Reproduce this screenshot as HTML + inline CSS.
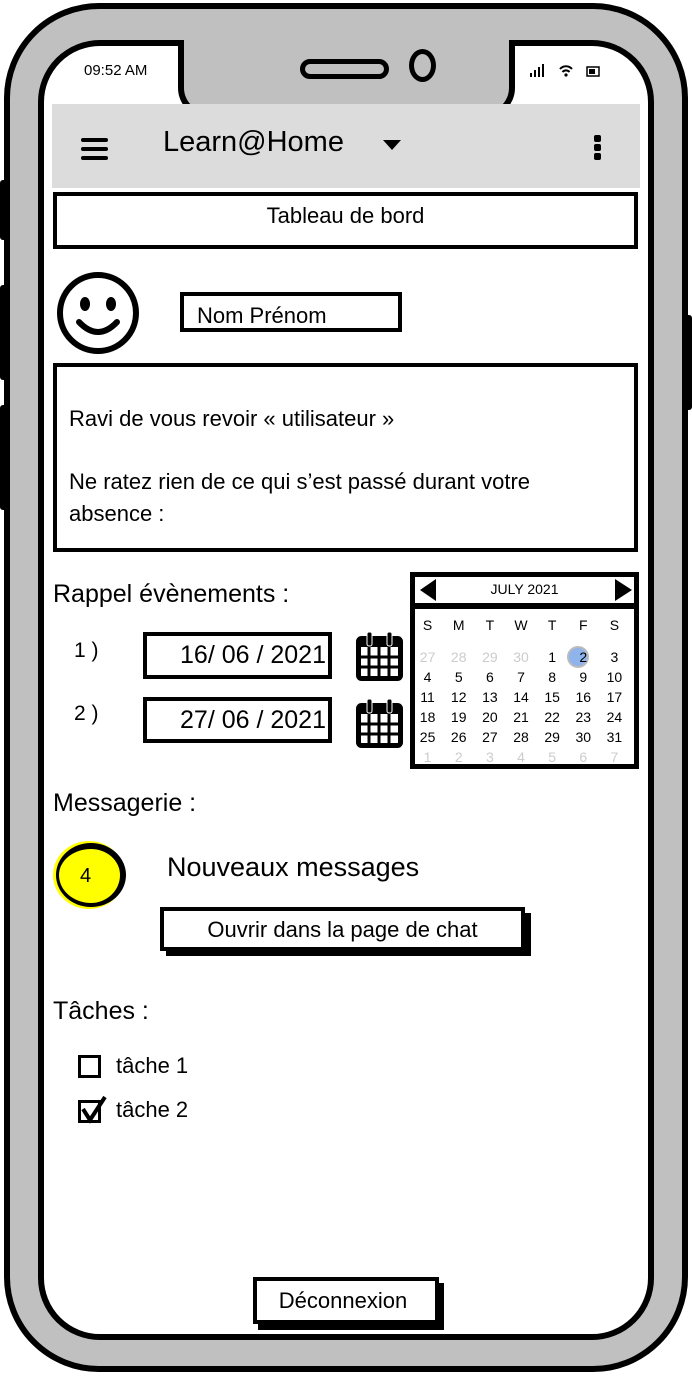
<!DOCTYPE html>
<html><head><meta charset="utf-8"><style>
body{margin:0;width:692px;height:1376px;position:relative;background:#fff;font-family:"Liberation Sans",sans-serif;overflow:hidden;color:#000}
.a{position:absolute}
.t{position:absolute;white-space:nowrap;line-height:1}
.box{position:absolute;border:4px solid #000;background:#fff;box-sizing:border-box}
.cal td{text-align:center;font-size:14px;height:20px;padding:0}
.g{color:#ccc}
</style></head><body>
<div class="a" style="left:0;top:180px;width:8px;height:60px;background:#000;border-radius:3px"></div>
<div class="a" style="left:0;top:285px;width:8px;height:95px;background:#000;border-radius:3px"></div>
<div class="a" style="left:0;top:405px;width:8px;height:105px;background:#000;border-radius:3px"></div>
<div class="a" style="left:684px;top:315px;width:8px;height:95px;background:#000;border-radius:3px"></div>
<div class="a" style="left:4px;top:3px;width:684px;height:1369px;box-sizing:border-box;border:6px solid #000;border-radius:95px;background:#c0c0c0"></div>
<div class="a" style="left:38px;top:40px;width:616px;height:1300px;box-sizing:border-box;border:6px solid #000;border-radius:62px;background:#fff"></div>
<div class="a" style="left:178px;top:40px;width:337px;height:78px;box-sizing:border-box;border:6px solid #000;border-top:none;border-radius:0 0 30px 30px;background:#c0c0c0"></div>
<div class="a" style="left:184px;top:40px;width:325px;height:8px;background:#c0c0c0"></div>
<div class="a" style="left:300px;top:59px;width:89px;height:20px;box-sizing:border-box;border:5px solid #000;border-radius:10px;background:#c0c0c0"></div>
<div class="a" style="left:409px;top:49px;width:27px;height:33px;box-sizing:border-box;border:5px solid #000;border-radius:50%;background:#c0c0c0"></div>
<div class="t" style="left:84px;top:63px;font-size:15px">09:52 AM</div>
<svg class="a" style="left:528px;top:62px" width="80" height="18"><rect x="2" y="11" width="2" height="4"/><rect x="6" y="8" width="2" height="7"/><rect x="10" y="5" width="2" height="10"/><rect x="14" y="2" width="2" height="13"/><path d="M32 7a8 8 0 0 1 12 0M34.5 10a4.5 4.5 0 0 1 7 0" stroke="#000" stroke-width="2" fill="none"/><circle cx="38" cy="13" r="1.6"/><rect x="59" y="5" width="12" height="9" fill="none" stroke="#000" stroke-width="1.5"/><rect x="61" y="7" width="6" height="5"/></svg>
<div class="a" style="left:52px;top:104px;width:588px;height:84px;background:#dcdcdc"></div>
<div class="a" style="left:81px;top:138px;width:27px;height:4px;background:#000;border-radius:2px"></div>
<div class="a" style="left:81px;top:147px;width:27px;height:4px;background:#000;border-radius:2px"></div>
<div class="a" style="left:81px;top:156px;width:27px;height:4px;background:#000;border-radius:2px"></div>
<div class="t" style="left:163px;top:128px;font-size:29px">Learn@Home</div>
<svg class="a" style="left:382px;top:139px" width="20" height="12"><path d="M1 1h18l-9 10z"/></svg>
<div class="a" style="left:594px;top:135px;width:7px;height:7px;background:#000;border-radius:2px"></div>
<div class="a" style="left:594px;top:144px;width:7px;height:7px;background:#000;border-radius:2px"></div>
<div class="a" style="left:594px;top:153px;width:7px;height:7px;background:#000;border-radius:2px"></div>
<div class="box" style="left:53px;top:192px;width:585px;height:57px"></div>
<div class="t" style="left:53px;top:205px;width:585px;text-align:center;font-size:22px">Tableau de bord</div>
<svg class="a" style="left:55px;top:270px" width="88" height="88"><circle cx="43" cy="43" r="38" fill="none" stroke="#000" stroke-width="6"/><ellipse cx="30" cy="34" rx="5" ry="7"/><ellipse cx="56" cy="34" rx="5" ry="7"/><path d="M24 52q19 20 38 0" fill="none" stroke="#000" stroke-width="6" stroke-linecap="round"/></svg>
<div class="box" style="left:180px;top:292px;width:222px;height:40px"></div>
<div class="t" style="left:197px;top:305px;font-size:22px">Nom Prénom</div>
<div class="box" style="left:53px;top:363px;width:585px;height:189px"></div>
<div class="t" style="left:69px;top:408px;font-size:22px">Ravi de vous revoir « utilisateur »</div>
<div class="t" style="left:69px;top:471px;font-size:22px">Ne ratez rien de ce qui s’est passé durant votre</div>
<div class="t" style="left:69px;top:503px;font-size:22px">absence :</div>
<div class="t" style="left:53px;top:582px;font-size:25px">Rappel évènements :</div>
<div class="t" style="left:74px;top:640px;font-size:21px">1 )</div>
<div class="t" style="left:74px;top:703px;font-size:21px">2 )</div>
<div class="box" style="left:143px;top:632px;width:189px;height:47px"></div>
<div class="t" style="left:143px;top:643px;width:183px;text-align:right;font-size:25px">16/ 06 / 2021</div>
<div class="box" style="left:143px;top:697px;width:189px;height:46px"></div>
<div class="t" style="left:143px;top:708px;width:183px;text-align:right;font-size:25px">27/ 06 / 2021</div>
<svg class="a" style="left:356px;top:630px" width="48" height="120"><g id="c"><rect x="2.5" y="8.5" width="42" height="40" rx="3" fill="none" stroke="#000" stroke-width="5"/><rect x="2" y="8" width="43" height="9"/><rect x="11" y="2" width="5" height="14" rx="2" stroke="#fff" stroke-width="1"/><rect x="31" y="2" width="5" height="14" rx="2" stroke="#fff" stroke-width="1"/><path d="M4 27h39M4 37h39M13 17v30M23 17v30M33 17v30" stroke="#000" stroke-width="3"/></g><use href="#c" y="67"/></svg>
<div class="a" style="left:410px;top:572px;width:229px;height:197px;box-sizing:border-box;border:5px solid #000;background:#fff"></div>
<div class="a" style="left:413px;top:603px;width:223px;height:6px;background:#000"></div>
<svg class="a" style="left:418px;top:578px" width="216" height="24"><path d="M2 12L18 1v22z"/><path d="M214 12L197 1v22z"/></svg>
<div class="t" style="left:410px;top:582px;width:229px;text-align:center;font-size:14px">JULY 2021</div>
<div class="a" style="left:567px;top:646px;width:22px;height:22px;border-radius:50%;background:#8fb4ec;border:2px solid #bbb;box-sizing:border-box"></div>
<table class="a cal" style="left:412px;top:615px;border-collapse:collapse;width:218px;table-layout:fixed">
<tr><td>S</td><td>M</td><td>T</td><td>W</td><td>T</td><td>F</td><td>S</td></tr>
<tr style="height:12px"><td colspan="7" style="height:12px"></td></tr>
<tr><td class="g">27</td><td class="g">28</td><td class="g">29</td><td class="g">30</td><td>1</td><td>2</td><td>3</td></tr>
<tr><td>4</td><td>5</td><td>6</td><td>7</td><td>8</td><td>9</td><td>10</td></tr>
<tr><td>11</td><td>12</td><td>13</td><td>14</td><td>15</td><td>16</td><td>17</td></tr>
<tr><td>18</td><td>19</td><td>20</td><td>21</td><td>22</td><td>23</td><td>24</td></tr>
<tr><td>25</td><td>26</td><td>27</td><td>28</td><td>29</td><td>30</td><td>31</td></tr>
<tr><td class="g">1</td><td class="g">2</td><td class="g">3</td><td class="g">4</td><td class="g">5</td><td class="g">6</td><td class="g">7</td></tr>
</table>
<div class="t" style="left:53px;top:791px;font-size:25px">Messagerie :</div>
<div class="a" style="left:53px;top:841px;width:72px;height:68px;border-radius:50%;background:#ffff00"></div>
<div class="a" style="left:56px;top:843px;width:70px;height:64px;box-sizing:border-box;border:6px solid #000;border-left-width:3px;border-bottom-width:4px;border-radius:50%"></div>
<div class="t" style="left:80px;top:866px;font-size:20px">4</div>
<div class="t" style="left:167px;top:854px;font-size:27px">Nouveaux messages</div>
<div class="a" style="left:166px;top:913px;width:365px;height:43px;background:#000"></div>
<div class="box" style="left:160px;top:907px;width:365px;height:44px"></div>
<div class="t" style="left:160px;top:919px;width:365px;text-align:center;font-size:22px">Ouvrir dans la page de chat</div>
<div class="t" style="left:53px;top:999px;font-size:25px">Tâches :</div>
<div class="a" style="left:78px;top:1055px;width:23px;height:23px;box-sizing:border-box;border:3px solid #000"></div>
<div class="t" style="left:116px;top:1055px;font-size:22px">tâche 1</div>
<div class="a" style="left:78px;top:1100px;width:23px;height:23px;box-sizing:border-box;border:3px solid #000"></div>
<svg class="a" style="left:78px;top:1095px" width="30" height="30"><path d="M5 14l7 11L27 2" fill="none" stroke="#000" stroke-width="4"/></svg>
<div class="t" style="left:116px;top:1099px;font-size:22px">tâche 2</div>
<div class="a" style="left:258px;top:1283px;width:186px;height:47px;background:#000"></div>
<div class="box" style="left:253px;top:1277px;width:186px;height:47px"></div>
<div class="t" style="left:253px;top:1290px;width:180px;text-align:center;font-size:22px">Déconnexion</div>
</body></html>
